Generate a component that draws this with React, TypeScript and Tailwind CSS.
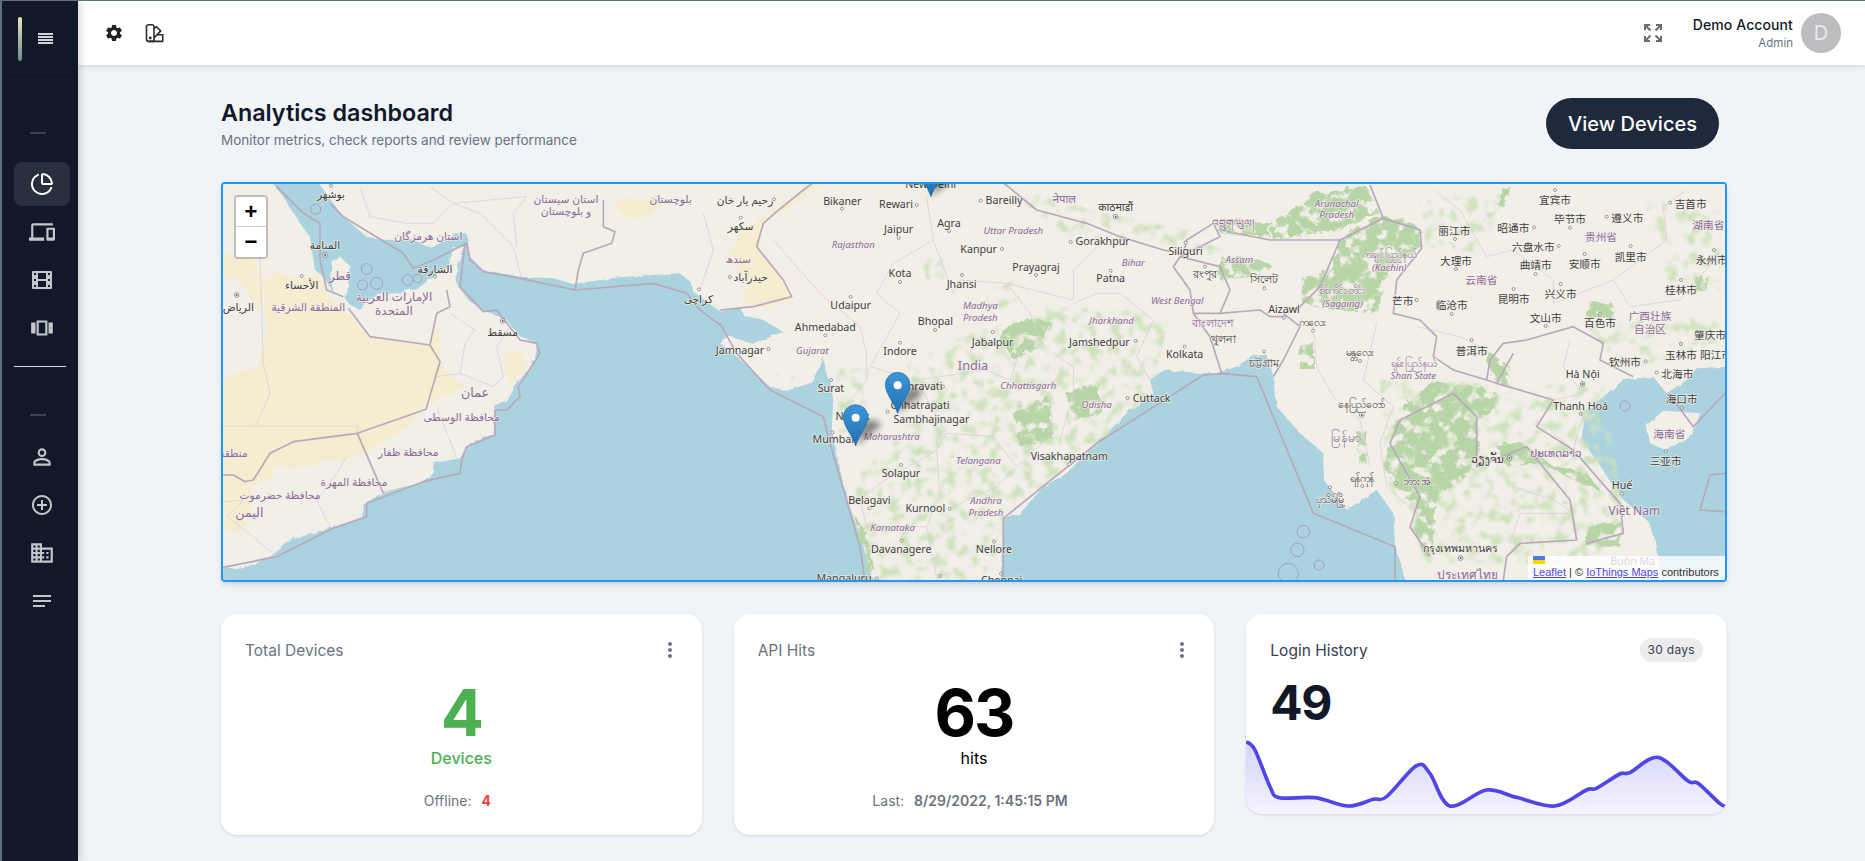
import { ChartPie } from "lucide-react";
import {
  MdMoreVert,
  MdOutlineControlPoint,
  MdOutlineDevices,
  MdOutlineDomain,
  MdOutlineNotes,
  MdOutlinePersonOutline,
  MdOutlineViewCarousel,
  MdSettings,
} from "react-icons/md";

// Map coordinates are page px * 3, the three offsets below are the crop origins
const A = 660;
const B = 2160;
const C = 3660;

const pts = (ox: number, s: string) =>
  s
    .trim()
    .split(/\s+/)
    .map((p) => {
      const [x, y] = p.split(",").map(Number);
      return `${x + ox},${y + 540}`;
    })
    .join(" ");

const arabia =
  pts(A, "-40,1172 80,1160 150,1130 220,1075 330,1045 430,1010 430,975 490,935 600,910 640,880 640,850 720,835 740,800 820,760 825,680 860,665 885,620 945,540 950,490 900,470 860,420 800,395 750,365 715,320 705,285 735,200 700,205 685,260 640,290 600,320 540,338 470,345 420,390 385,370 372,350 385,340 392,260 360,230 335,250 330,300 345,345 310,290 285,270 278,225 270,170 240,130 190,50 150,0 -40,0");

const asia =
  pts(A, "290,0 340,70 370,110 440,170 500,180 560,175 640,205 700,160 740,160 750,230 790,270 900,290 1000,295 1060,312 1200,292 1380,280 1415,310 1420,335 1480,380") +
  " " +
  pts(B, "0,395 60,382 70,405 140,425 190,455 100,490 30,470 0,490 50,530 150,620 200,632 270,610 300,560 310,530 322,590 332,610 340,660 335,750 350,830 380,950 430,1100 470,1240 840,1240 850,1020 900,1000 970,920 1040,880 1130,790 1230,690 1300,640 1290,600 1330,570 1450,580 1500,575") +
  " " +
  pts(C, "50,560 100,525 140,525 160,600 170,680 240,760 310,820 312,900 380,990 470,930 520,1000 525,1100 570,1240 1330,1240 1310,1100 1290,1030 1200,950 1130,840 1085,780 1090,700 1150,650 1210,600 1300,590 1340,640 1400,600 1430,565 1540,560 1540,0") +
  " " +
  pts(A, "290,0");

const hainan = pts(C, "1280,735 1330,692 1440,700 1420,760 1340,812 1290,790");

const sand = [
  pts(A, "-40,600 120,560 140,440 130,300 170,280 240,300 290,280 330,350 385,400 450,470 630,495 650,420 660,545 700,590 740,620 620,680 540,760 440,820 380,830 250,860 180,860 100,920 70,1060 40,1060 -40,1030"),
  pts(A, "860,520 900,510 915,560 870,620 850,570"),
  pts(A, "1190,60 1320,50 1330,90 1240,115 1200,100"),
  pts(A, "-40,190 50,230 100,230 130,300 120,400 60,300 -40,280"),
  pts(B, "150,90 250,20 340,0 240,60 170,100 120,150 110,200 190,300 215,370 120,380 70,370 80,300 30,220 60,160"),
];

const forest = [
  pts(C, "150,130 220,95 290,40 440,20 480,100 360,150 160,180"),
  pts(C, "360,180 480,110 560,120 605,150 605,205 530,250 470,330 440,400 305,385 250,370 245,295 340,260"),
  pts(C, "0,230 120,240 160,260 100,290 0,300"),
  pts(C, "0,120 150,130 150,175 0,160"),
  pts(C, "240,490 285,490 285,570 240,570"),
  pts(C, "550,680 640,610 720,610 830,640 830,690 770,720 780,800 750,880 650,960 590,960 550,960 490,860 510,790 540,720"),
  pts(C, "590,960 650,960 640,1090 620,1130 590,1080"),
  pts(C, "830,800 900,780 1000,860 1100,880 1150,940 1060,900 960,850 860,860"),
  pts(C, "1095,370 1180,370 1180,415 1095,415"),
  pts(C, "800,510 870,560 860,620 810,590"),
  pts(C, "1100,1040 1205,1030 1200,1100 1100,1100"),
  pts(C, "410,750 440,750 440,850 415,850"),
  pts(C, "460,330 490,330 480,390 450,400"),
  pts(C, "850,20 870,20 860,80 840,80"),
  pts(C, "1430,290 1470,270 1460,330 1430,340"),
  pts(B, "840,470 920,410 1000,430 960,500 880,540"),
  pts(B, "880,680 990,650 1000,780 900,800"),
  pts(B, "1040,640 1130,600 1150,700 1060,720"),
  pts(B, "400,1000 440,1060 470,1200 450,1200"),
];

const meadow = [
  pts(B, "560,560 700,480 1000,380 1350,400 1300,620 1180,760 1000,900 860,1000 850,1100 750,1240 470,1240 400,900 600,700"),
  pts(B, "600,240 670,230 680,300 620,300"),
  pts(B, "800,340 880,300 950,340 800,400"),
  pts(B, "860,20 1150,100 1500,170 1500,230 1300,190 1050,170 950,100"),
  pts(B, "170,580 225,590 215,620 180,610"),
  pts(B, "350,560 450,560 430,760 350,760"),
  pts(C, "480,600 1150,620 1210,1000 1120,1150 620,1150 500,900"),
  pts(C, "600,60 850,40 800,220 620,200"),
  pts(C, "1100,440 1500,400 1500,520 1200,560"),
  pts(C, "1270,60 1500,90 1500,330 1340,300"),
];

const borders = [
  pts(A, "385,385 450,470 630,495 660,545 618,688 412,760 220,785 150,820 100,900 75,905 40,885 -40,885"),
  pts(A, "412,760 490,940"),
  pts(A, "630,495 650,400 690,380 680,330"),
  pts(A, "170,20 250,100 300,130 300,240 320,330 370,350"),
  pts(A, "330,70 370,110 550,220 580,265 640,240 740,190 750,240 790,275 900,295 1065,330 1300,310 1400,340 1440,390 1500,435"),
  pts(A, "-40,1172 170,1130 340,1045 440,1010 440,970 610,905 720,880 725,840 740,800 825,765 825,690 860,690 900,650 895,620 960,520 950,490 900,480 830,390 790,395 720,320 735,190"),
  pts(A, "1150,60 1150,140 1185,155 1175,190 1090,220 1075,270 1065,330"),
  pts(B, "0,430 50,520 150,630 310,710 330,790 420,1100 440,1240"),
  pts(B, "850,1240 850,1015 1130,790 1450,585 1530,580"),
  pts(B, "0,390 100,380 215,350 190,300 110,200 130,130 170,95 250,30 290,0"),
  pts(B, "840,0 950,90 1100,130 1200,170 1330,210 1390,220 1400,180 1480,130 1500,170 1380,230 1360,260 1410,330 1420,400 1470,470 1505,580"),
  pts(B, "1380,230 1500,260 1530,330 1500,400 1420,400"),
  pts(C, "0,580 110,590 280,1000 525,1100 525,1240"),
  pts(C, "0,150 150,180 360,180 490,115 450,15"),
  pts(C, "490,115 600,150 605,205 530,300 520,400 600,420 650,470 640,530 700,570 800,600 810,540 850,490 920,480 1060,440 1150,490 1140,540 1240,590"),
  pts(C, "360,180 300,320 240,380 190,400 240,440 220,480 190,540 160,590"),
  pts(C, "0,400 120,390 150,410 190,410"),
  pts(C, "700,640 620,680 540,720 510,790 560,880 600,950 570,1040 630,1130"),
  pts(C, "700,640 770,710 770,860 920,800 1050,960 1070,1080 900,1090 860,1130 850,1200"),
  pts(C, "800,600 830,610 880,520"),
  pts(C, "830,610 1000,660 950,740 1060,810 1200,970 1210,1060 1100,1090"),
  pts(C, "1515,640 1420,740 1345,640"),
  pts(C, "1515,880 1470,885 1440,990 1515,995"),
];

const thin = [
  pts(A, "108,735 150,640 130,550 120,230"),
  pts(A, "-40,738 412,738 412,760"),
  pts(A, "650,590 720,580 820,620 850,590 830,500 870,440"),
  pts(A, "720,580 735,490 765,450 690,400"),
  pts(A, "650,680 710,835"),
  pts(A, "380,830 350,880 290,960 330,1040"),
  pts(A, "-40,970 70,960 20,1010 100,1070 170,1130"),
  pts(A, "420,20 450,110 560,130 640,130 700,70 780,100 880,200 905,295"),
  pts(A, "630,20 700,70 920,50 880,100 890,200"),
  pts(A, "1450,100 1480,210 1440,330"),
  pts(B, "160,180 300,340 420,440 440,520 440,600 360,700"),
  pts(B, "620,50 640,180 520,250 470,340 540,400 450,560 590,600 800,570 870,600 900,510 960,470 930,400 860,310 720,300 700,340 640,180"),
  pts(B, "590,600 680,760 650,810 660,940 620,1040 660,1240"),
  pts(B, "650,810 480,910 420,960 440,1040 620,1040"),
  pts(B, "680,760 820,770 890,860 830,920 700,980"),
  pts(B, "870,600 990,640 1000,760 890,860"),
  pts(B, "1000,520 1060,560 1060,640 1020,780"),
  pts(B, "1060,370 1130,340 1200,340 1300,420 1250,530 1290,600"),
  pts(B, "860,310 1060,360 1060,270 1130,200"),
  pts(C, "470,430 430,600 520,680 480,790 500,920 590,1000"),
  pts(C, "280,440 290,560 340,650 420,720 450,860"),
  pts(C, "640,30 720,90 800,230 880,210 1000,300 1000,370 1180,300 1340,180"),
  pts(C, "590,440 720,470 800,510"),
  pts(C, "1340,180 1330,80 1400,30"),
  pts(C, "1180,300 1230,380 1380,360 1500,220"),
  pts(C, "880,920 1000,960 1060,1000 900,1000 870,1090"),
  pts(C, "1000,760 1060,810 1090,700"),
  pts(C, "1050,480 1030,560 1090,640 1000,660"),
];

const circles: [number, number, number][] = [
  [A + 440, 267, 16],
  [A + 428, 315, 15],
  [A + 563, 300, 16],
  [A + 593, 295, 13],
  [A + 287, 88, 15],
  [A + 470, 310, 18],
  [C + 1215, 678, 15],
  [C + 250, 1055, 19],
  [C + 232, 1110, 20],
  [C + 297, 1155, 15],
  [C + 205, 1180, 30],
];

type Kind = "c" | "p" | "i";
type Label = [number, number, string, Kind, number?];

const labelsA: Label[] = [
  [333, 55, "بوشهر", "c"],
  [625, 180, "استان هرمزگان", "p"],
  [1038, 70, "استان سيستان", "p"],
  [1038, 105, "و بلوچستان", "p"],
  [1352, 70, "بلوچستان", "p"],
  [315, 207, "المنامة", "c"],
  [360, 300, "قطر", "p", 36],
  [645, 280, "الشارقة", "c"],
  [245, 327, "الأحساء", "c"],
  [55, 392, "الرياض", "c"],
  [265, 392, "المنطقة الشرقية", "p"],
  [522, 362, "الإمارات العربية", "p", 36],
  [522, 405, "المتحدة", "p", 36],
  [848, 468, "مسقط", "c"],
  [1435, 368, "کراچی", "c"],
  [765, 650, "عمان", "p", 38],
  [725, 724, "محافظة الوسطى", "p"],
  [565, 828, "محافظة ظفار", "p"],
  [402, 918, "محافظة المهرة", "p"],
  [180, 957, "محافظة حضرموت", "p"],
  [88, 1012, "اليمن", "p", 38],
  [40, 830, "منطقة", "p"],
];

const labelsB: Label[] = [
  [75, 72, "رحیم یار خان", "c"],
  [62, 150, "سکھر", "c"],
  [55, 250, "سندھ", "p"],
  [92, 303, "حیدرآباد", "c"],
  [367, 75, "Bikaner", "c"],
  [528, 85, "Rewari", "c"],
  [632, 24, "New Delhi", "c"],
  [852, 73, "Bareilly", "c"],
  [1033, 68, "नेपाल", "p", 34],
  [1187, 92, "काठमाडौं", "c"],
  [687, 140, "Agra", "c"],
  [536, 160, "Jaipur", "c"],
  [880, 163, "Uttar Pradesh", "i"],
  [400, 204, "Rajasthan", "i"],
  [1148, 196, "Gorakhpur", "c"],
  [776, 219, "Kanpur", "c"],
  [1397, 224, "Siliguri", "c"],
  [1240, 259, "Bihar", "i"],
  [948, 272, "Prayagraj", "c"],
  [540, 292, "Kota", "c"],
  [1172, 306, "Patna", "c"],
  [725, 325, "Jhansi", "c"],
  [1455, 294, "রংপুর", "c"],
  [392, 386, "Udaipur", "c"],
  [781, 387, "Madhya", "i"],
  [781, 422, "Pradesh", "i"],
  [1372, 371, "West Bengal", "i"],
  [646, 435, "Bhopal", "c"],
  [316, 452, "Ahmedabad", "c"],
  [1175, 431, "Jharkhand", "i"],
  [1480, 440, "বাংলাদেশ", "p", 34],
  [818, 497, "Jabalpur", "c"],
  [1138, 497, "Jamshedpur", "c"],
  [60, 521, "Jamnagar", "c"],
  [277, 523, "Gujarat", "i"],
  [540, 524, "Indore", "c"],
  [1394, 533, "Kolkata", "c"],
  [1510, 490, "খুলনা", "c"],
  [759, 571, "India", "p", 38],
  [333, 636, "Surat", "c"],
  [600, 631, "Amravati", "c"],
  [925, 628, "Chhattisgarh", "i"],
  [1295, 665, "Cuttack", "c"],
  [600, 688, "Chhatrapati", "c"],
  [634, 729, "Sambhajinagar", "c"],
  [1130, 685, "Odisha", "i"],
  [398, 720, "Nashik", "c"],
  [340, 790, "Mumbai", "c"],
  [515, 781, "Maharashtra", "i"],
  [775, 851, "Telangana", "i"],
  [1048, 839, "Visakhapatnam", "c"],
  [543, 892, "Solapur", "c"],
  [448, 972, "Belagavi", "c"],
  [616, 997, "Kurnool", "c"],
  [798, 973, "Andhra", "i"],
  [798, 1009, "Pradesh", "i"],
  [518, 1052, "Karnataka", "i"],
  [544, 1119, "Davanagere", "c"],
  [822, 1118, "Nellore", "c"],
  [372, 1205, "Mangaluru", "c"],
  [845, 1212, "Chennai", "c"],
];

const labelsC: Label[] = [
  [350, 80, "Arunachal", "i"],
  [350, 115, "Pradesh", "i"],
  [1005, 72, "宜宾市", "c"],
  [1412, 84, "吉首市", "c"],
  [1222, 125, "遵义市", "c"],
  [1050, 130, "毕节市", "c"],
  [1465, 148, "湖南省", "p"],
  [703, 165, "丽江市", "c"],
  [880, 155, "昭通市", "c"],
  [1143, 184, "贵州省", "p"],
  [940, 212, "六盘水市", "c"],
  [1232, 242, "凯里市", "c"],
  [1475, 252, "永州市", "c"],
  [708, 254, "大理市", "c"],
  [947, 268, "曲靖市", "c"],
  [1094, 265, "安顺市", "c"],
  [784, 313, "云南省", "p"],
  [1383, 342, "桂林市", "c"],
  [1022, 354, "兴义市", "c"],
  [881, 369, "昆明市", "c"],
  [548, 375, "芒市", "c"],
  [695, 388, "临沧市", "c"],
  [1290, 420, "广西壮族", "p"],
  [1290, 460, "自治区", "p"],
  [977, 426, "文山市", "c"],
  [1140, 442, "百色市", "c"],
  [1470, 478, "肇庆市", "c"],
  [1383, 536, "玉林市", "c"],
  [1488, 538, "阳江市", "c"],
  [755, 524, "普洱市", "c"],
  [1215, 559, "钦州市", "c"],
  [1372, 594, "北海市", "c"],
  [1088, 594, "Hà Nội", "c"],
  [1082, 689, "Thanh Hoá", "c"],
  [1385, 670, "海口市", "c"],
  [1348, 775, "海南省", "p"],
  [1337, 856, "三亚市", "c"],
  [1206, 928, "Huế", "c"],
  [1243, 1005, "Việt Nam", "p", 36],
  [1238, 1155, "Buôn Ma", "c"],
  [508, 233, "ကချင်ပြည်နယ်", "p"],
  [508, 272, "(Kachin)", "i"],
  [368, 342, "စစ်ကိုင်းတိုင်း", "p"],
  [368, 381, "(Sagaing)", "i"],
  [279, 438, "ကလေး", "c"],
  [420, 529, "မန္တလေး", "c"],
  [580, 560, "ရှမ်းပြည်နယ်", "p"],
  [580, 598, "Shan State", "i"],
  [425, 685, "နေပြည်တော်", "c"],
  [378, 785, "မြန်မာ", "p", 38],
  [427, 905, "ရန်ကုန်", "c"],
  [588, 915, "ဘားအံ", "c"],
  [330, 970, "ပုသိမ်မြို့", "c"],
  [133, 310, "সিলেট", "c"],
  [132, 562, "চট্টগ্রাম", "c"],
  [192, 400, "Aizawl", "c"],
  [58, 248, "Assam", "i"],
  [802, 848, "ວຽງຈັນ", "c"],
  [1008, 830, "ປະເທດລາວ", "p"],
  [722, 1115, "กรุงเทพมหานคร", "c"],
  [742, 1197, "ประเทศไทย", "p", 36],
  [40, 140, "འབྲུག་ཡུལ།", "p"],
];

const dots: [number, number, number?][] = [
  [A + 333, 17],
  [A + 315, 225, 1],
  [A + 245, 288],
  [A + 50, 345, 1],
  [A + 848, 423, 1],
  [A + 1437, 328],
  [A + 645, 290],
  ...(
    [
      [162, 58], [62, 113], [30, 291], [366, 86], [590, 75], [782, 62], [687, 153], [536, 174],
      [1052, 186], [846, 207], [1397, 188], [948, 285], [540, 306], [1172, 272], [726, 285],
      [1455, 260], [392, 351], [645, 450], [316, 466], [818, 456], [1247, 483], [145, 507],
      [540, 488], [1394, 500], [1475, 479], [333, 600], [669, 620], [1223, 654], [503, 695],
      [337, 757], [1048, 853], [543, 855], [448, 985], [689, 986], [545, 1082], [822, 1085],
      [470, 1195], [660, 1188], [843, 1181],
    ] as [number, number][]
  ).map(([x, y]): [number, number] => [B + x, y]),
  [B + 1187, 110, 1],
  ...(
    [
      [1005, 30], [1350, 68], [1160, 110], [1050, 143], [705, 177], [942, 142], [1016, 198],
      [1232, 198], [1482, 210], [708, 267], [947, 282], [1094, 222], [1383, 300], [1022, 312],
      [881, 327], [590, 360], [695, 402], [977, 438], [1140, 402], [1383, 492], [755, 480],
      [1277, 544], [1310, 578], [1082, 702], [1385, 684], [1337, 813], [1206, 941], [279, 452],
      [420, 543], [427, 918], [527, 910], [330, 922], [133, 325], [132, 515], [192, 413],
    ] as [number, number][]
  ).map(([x, y]): [number, number] => [C + x, y]),
  [C + 1088, 612, 1],
  [C + 425, 705, 1],
  [C + 868, 834, 1],
  [C + 722, 1134, 1],
];

const labelGroups: [number, Label[]][] = [
  [A, labelsA],
  [B, labelsB],
  [C, labelsC],
];

const pins: [number, number][] = [
  [B + 633, 50],
  [B + 533, 700],
  [B + 407, 797],
];

function MapView() {
  return (
    <svg viewBox="669 552 4506 1188" preserveAspectRatio="none" className="block w-full h-full">
      <defs>
        <filter id="rough" x="-5%" y="-5%" width="110%" height="110%">
          <feTurbulence type="fractalNoise" baseFrequency="0.02" numOctaves="3" seed="4" />
          <feDisplacementMap in="SourceGraphic" scale="28" />
          <feGaussianBlur stdDeviation="1.6" />
        </filter>
        {/* mottled vegetation: noise alpha thresholded into a mask */}
        <filter id="patchy" x="-5%" y="-5%" width="110%" height="110%">
          <feTurbulence type="fractalNoise" baseFrequency="0.03" numOctaves="4" seed="7" />
          <feColorMatrix type="matrix" values="0 0 0 0 0  0 0 0 0 0  0 0 0 0 0  0 0 0 4.5 -2.2" result="mask" />
          <feComposite in="SourceGraphic" in2="mask" operator="in" />
          <feGaussianBlur stdDeviation="3" />
        </filter>
        <filter id="dense" x="-5%" y="-5%" width="110%" height="110%">
          <feTurbulence type="fractalNoise" baseFrequency="0.03" numOctaves="4" seed="12" result="noise" />
          <feColorMatrix in="noise" type="matrix" values="0 0 0 0 0  0 0 0 0 0  0 0 0 0 0  0 0 0 6 -1.9" result="mask" />
          <feDisplacementMap in="SourceGraphic" in2="noise" scale="30" result="moved" />
          <feComposite in="moved" in2="mask" operator="in" />
          <feGaussianBlur stdDeviation="2" />
        </filter>
        <filter id="coast" x="-5%" y="-5%" width="110%" height="110%">
          <feTurbulence type="fractalNoise" baseFrequency="0.03" numOctaves="3" seed="9" />
          <feDisplacementMap in="SourceGraphic" scale="12" />
        </filter>
        <filter id="pinShadow" x="-50%" y="-50%" width="200%" height="200%">
          <feGaussianBlur stdDeviation="9" />
        </filter>
        <linearGradient id="pinFill" x1="0" y1="0" x2="0" y2="1">
          <stop offset="0" stopColor="#3d96d8" />
          <stop offset="1" stopColor="#2270b0" />
        </linearGradient>
      </defs>
      <rect x="669" y="552" width="4506" height="1188" fill="#aad3df" />
      <g filter="url(#coast)" fill="#f2efe9">
        <polygon points={arabia} />
        <polygon points={asia} />
        <polygon points={hainan} />
      </g>
      <g filter="url(#rough)">
        {sand.map((p, i) => (
          <polygon key={i} points={p} fill="#f6ecd0" />
        ))}
      </g>
      <g filter="url(#patchy)">
        {meadow.map((p, i) => (
          <polygon key={i} points={p} fill="#cfe2bd" />
        ))}
      </g>
      <g filter="url(#dense)">
        {forest.map((p, i) => (
          <polygon key={i} points={p} fill="#b7d5a7" />
        ))}
      </g>
      <g fill="none" strokeLinejoin="round">
        {thin.map((p, i) => (
          <polyline key={i} points={p} stroke="#dbd0da" strokeWidth="2.5" />
        ))}
        {borders.map((p, i) => (
          <polyline key={i} points={p} stroke="#b9a8bb" strokeWidth="5" />
        ))}
        {circles.map(([x, y, r], i) => (
          <circle key={i} cx={x} cy={y + 540} r={r} stroke="#a99cb5" strokeWidth="3" />
        ))}
      </g>
      {dots.map(([x, y, ring], i) => (
        <g key={i}>
          <circle cx={x} cy={y + 540} r={ring ? 7 : 4.5} fill="#fff" stroke="#666" strokeWidth="2" />
          {ring ? <circle cx={x} cy={y + 540} r="3" fill="#555" /> : null}
        </g>
      ))}
      <g
        textAnchor="middle"
        strokeLinejoin="round"
        className="font-['Noto_Sans','DejaVu_Sans','Noto_Sans_CJK_SC',sans-serif]"
      >
        {labelGroups.map(([ox, list]) =>
          list.map(([x, y, text, kind, size]) => (
            <text
              key={`${ox}${text}${x}`}
              x={x + ox}
              y={y + 540}
              fontSize={size ?? (kind === "i" ? 29 : 32)}
              fontStyle={kind === "i" ? "italic" : "normal"}
              fill={kind === "c" ? "#3f3f3f" : "#8b6b97"}
              stroke="#f2efe9"
              strokeOpacity="0.8"
              strokeWidth="5"
              paintOrder="stroke"
            >
              {text}
            </text>
          )),
        )}
      </g>
      {pins.map(([x, y]) => (
        <g key={x} transform={`translate(${x} ${y + 540})`}>
          <path d="M0,0 L70,-55 C85,-70 50,-85 25,-70 Z" fill="#000" opacity="0.45" filter="url(#pinShadow)" />
          <path
            d="M0,0 C-8,-28 -37,-58 -37,-86 A37,37 0 1 1 37,-86 C37,-58 8,-28 0,0 Z"
            fill="url(#pinFill)"
            stroke="#1f6ba6"
            strokeWidth="2"
          />
          <circle cx="0" cy="-84" r="12" fill="#fff" />
        </g>
      ))}
    </svg>
  );
}

const curve = [
  [48, 425], [75, 450], [120, 560], [148, 593], [255, 593], [355, 618], [430, 598], [470, 590],
  [560, 497], [600, 520], [660, 618], [770, 570], [860, 592], [975, 618], [1070, 570], [1100, 565],
  [1170, 522], [1200, 518], [1285, 472], [1375, 543], [1405, 550], [1470, 610], [1491, 620],
];

// catmull-rom through the points
function smooth(p: number[][]) {
  let d = `M${p[0][0]},${p[0][1]}`;
  for (let i = 0; i < p.length - 1; i++) {
    const a = p[Math.max(i - 1, 0)];
    const b = p[i];
    const c = p[i + 1];
    const e = p[Math.min(i + 2, p.length - 1)];
    const c1 = [b[0] + (c[0] - a[0]) / 6, b[1] + (c[1] - a[1]) / 6];
    const c2 = [c[0] - (e[0] - b[0]) / 6, c[1] - (e[1] - b[1]) / 6];
    d += ` C${c1[0]},${c1[1]} ${c2[0]},${c2[1]} ${c[0]},${c[1]}`;
  }
  return d;
}

function LoginChart() {
  const line = smooth(curve);
  return (
    <svg viewBox="48 405 1443 237" preserveAspectRatio="none" className="block w-full h-[79px] mt-2">
      <defs>
        <linearGradient id="area" x1="0" y1="0" x2="0" y2="1">
          <stop offset="0" stopColor="#4f46e5" stopOpacity="0.24" />
          <stop offset="1" stopColor="#4f46e5" stopOpacity="0.06" />
        </linearGradient>
      </defs>
      <path d={`${line} L1491,642 L48,642 Z`} fill="url(#area)" />
      <path d={line} fill="none" stroke="#4f46e5" strokeWidth="11" />
    </svg>
  );
}

function PaletteIcon() {
  return (
    <svg viewBox="0 0 24 24" className="w-[20px] h-[20px]" fill="none" stroke="#2b2b2b" strokeWidth="1.9" strokeLinejoin="round">
      <path d="M3 4.5A2.5 2.5 0 0 1 5.500 2h4A2.500 2.500 0 0 1 12 4.500V22H5.500A2.500 2.500 0 0 1 3 19.500Z" />
      <path d="M12 6.500 15 4.500 20 9.500 12 18" />
      <path d="M16 14H22.500V22H5.500" />
      <circle cx="7.500" cy="18" r="0.8" fill="#2b2b2b" />
    </svg>
  );
}

function ExpandIcon() {
  return (
    <svg viewBox="0 0 18 18" className="w-[18px] h-[18px]" fill="none" stroke="#6b6b6b" strokeWidth="2">
      <path d="M1 6V1h5M1 1l5.500 5.500" />
      <path d="M17 6V1h-5M17 1l-5.500 5.500" />
      <path d="M1 12v5h5M1 17l5.500-5.500" />
      <path d="M17 12v5h-5M17 17l-5.500-5.500" />
    </svg>
  );
}

function FilmIcon() {
  return (
    <svg viewBox="0 0 20 18" className="w-5 h-[18px]" fill="#c3c6cb">
      <path
        fillRule="evenodd"
        d="M1 0h18a1 1 0 0 1 1 1v16a1 1 0 0 1-1 1H1a1 1 0 0 1-1-1V1a1 1 0 0 1 1-1ZM2 2v2h2V2H2Zm0 6v2h2V8H2Zm0 6v2h2v-2H2ZM16 2v2h2V2h-2Zm0 6v2h2V8h-2Zm0 6v2h2v-2h-2ZM6 2v6h8V2H6Zm0 8v6h8v-6H6Z"
      />
    </svg>
  );
}

function NavItem({ icon, active }: { icon: React.ReactNode; active?: boolean }) {
  return (
    <div className={`ml-3 w-14 h-11 rounded-lg flex items-center justify-center text-[#c3c6cb] ${active ? "bg-[#282f3d] text-white" : ""}`}>
      {icon}
    </div>
  );
}

function Sidebar() {
  return (
    <aside className="relative z-20 w-[78px] shrink-0 h-full bg-[#111827] border-l-2 border-[#5f7078] shadow-[2px_0_8px_rgba(0,0,0,0.18)]">
      <div className="h-[76px] border-b border-[#0b111d] flex items-start">
        <div className="ml-4 mt-[16px] w-1 h-11 rounded-sm bg-gradient-to-b from-[#e9e5c4] to-[#6f8d88]" />
        <div className="ml-[16px] mt-[32px] flex flex-col gap-[1px] w-[15px]">
          <div className="h-[2px] bg-[#cfd2d6]" />
          <div className="h-[2px] bg-[#cfd2d6]" />
          <div className="h-[2px] bg-[#cfd2d6]" />
          <div className="h-[2px] bg-[#cfd2d6]" />
        </div>
      </div>
      <div className="ml-7 mt-[55px] w-4 h-0.5 bg-[#374151]" />
      <div className="mt-7 flex flex-col gap-1">
        <NavItem active icon={<ChartPie size={24} strokeWidth={2} />} />
        <NavItem icon={<MdOutlineDevices size={26} />} />
        <NavItem icon={<FilmIcon />} />
        <NavItem icon={<MdOutlineViewCarousel size={26} />} />
      </div>
      <div className="ml-3 mt-4 w-[52px] h-px bg-[#d8dade]" />
      <div className="ml-7 mt-[47px] w-4 h-0.5 bg-[#374151]" />
      <div className="mt-[19px] flex flex-col gap-1">
        <NavItem icon={<MdOutlinePersonOutline size={26} />} />
        <NavItem icon={<MdOutlineControlPoint size={24} />} />
        <NavItem icon={<MdOutlineDomain size={26} />} />
        <NavItem icon={<MdOutlineNotes size={24} />} />
      </div>
    </aside>
  );
}

function TopBar() {
  return (
    <header className="relative z-10 h-[64px] shrink-0 bg-white shadow-[0_1px_6px_rgba(0,0,0,0.14)] flex items-center pl-[26px] pr-6">
      <MdSettings size={20} className="text-[#212121]" />
      <div className="ml-5">
        <PaletteIcon />
      </div>
      <div className="ml-auto mr-[31px]">
        <ExpandIcon />
      </div>
      <div className="text-right mr-2">
        <div className="text-sm font-medium text-[#111827] tracking-[0.1px] leading-5">Demo Account</div>
        <div className="text-[11.5px] text-[#6b7280] leading-4">Admin</div>
      </div>
      <div className="w-10 h-10 rounded-full bg-[#bdbdbd] text-[#e4eaf5] text-xl flex items-center justify-center">D</div>
    </header>
  );
}

function StatCard({
  title,
  value,
  unit,
  footer,
  valueColor,
  unitClass,
}: {
  title: string;
  value: string;
  unit: string;
  footer: React.ReactNode;
  valueColor: string;
  unitClass: string;
}) {
  return (
    <div className="bg-white rounded-2xl shadow-[0_1px_3px_rgba(0,0,0,0.12)] px-6 pt-6 pb-6 h-[221px]">
      <div className="flex items-center justify-between h-6">
        <span className="pt-0.5 text-[15.5px] text-[#6b7280]">{title}</span>
        <MdMoreVert size={24} className="text-[#6b7280] -mr-1" />
      </div>
      <div className={`mt-[18px] text-center text-[64px] tracking-[-2px] font-bold leading-[66px] ${valueColor}`}>{value}</div>
      <div className={`text-center text-base leading-6 ${unitClass}`}>{unit}</div>
      <div className="mt-[21px] pr-2 text-center text-sm leading-5 text-[#6b7280]">{footer}</div>
    </div>
  );
}

export default function App() {
  return (
    <div className="h-screen w-full overflow-hidden flex bg-[#f0f4f9] border-t border-[#5f7078] font-['Inter',sans-serif]">
      <Sidebar />
      <div className="flex-1 min-w-0 flex flex-col">
        <TopBar />
        <main className="pl-[143px] pr-[138px]">
          <div className="mt-[33px] h-[51px] flex items-start justify-between">
            <div>
              <h1 className="text-[23.3px] font-semibold text-[#111827] leading-[30px]">Analytics dashboard</h1>
              <p className="mt-0.5 text-[13.5px] text-[#6b7280] leading-5">Monitor metrics, check reports and review performance</p>
            </div>
            <button className="mr-2 w-[173px] h-[51px] rounded-full bg-[#1e293b] text-white text-xl font-medium">View Devices</button>
          </div>

          <div className="relative mt-[33px] h-[400px] border-2 border-[#2196f3] rounded-[4px] overflow-hidden shadow-md">
            <MapView />
            <div className="absolute left-[11px] top-[11px] border-2 border-black/20 rounded-[4px] bg-clip-padding">
              <button className="block w-[30px] h-[30px] bg-white rounded-t-[2px] border-b border-[#ccc] text-[22px] leading-[28px] font-bold text-black font-['Liberation_Sans',sans-serif]">+</button>
              <button className="block w-[30px] h-[30px] bg-white rounded-b-[2px] text-[22px] leading-[28px] font-bold text-black font-['Liberation_Sans',sans-serif]">−</button>
            </div>
            <div className="absolute right-0 bottom-0 w-[197px] h-6 pl-[5px] bg-white/80 text-[11px] leading-3 text-[#333] font-['Liberation_Sans',sans-serif]">
              <svg viewBox="0 0 12 8" className="block w-3 h-2">
                <rect width="12" height="4" fill="#4c7be1" />
                <rect y="4" width="12" height="4" fill="#ffd500" />
              </svg>
              <div className="mt-[2px] whitespace-nowrap">
                <span className="underline text-[#4f46e5]">Leaflet</span> | © <span className="underline text-[#4f46e5]">IoThings Maps</span> contributors
              </div>
            </div>
          </div>

          <div className="mt-8 grid grid-cols-3 gap-8 items-start">
            <StatCard
              title="Total Devices"
              value="4"
              unit="Devices"
              valueColor="text-[#4caf50]"
              unitClass="text-[#4caf50] font-medium"
              footer={
                <>
                  Offline: <span className="ml-1.5 font-bold text-[#f44336]">4</span>
                </>
              }
            />
            <StatCard
              title="API Hits"
              value="63"
              unit="hits"
              valueColor="text-black"
              unitClass="text-black"
              footer={
                <>
                  Last: <span className="ml-1.5 font-semibold">8/29/2022, 1:45:15 PM</span>
                </>
              }
            />
            <div className="bg-white rounded-2xl shadow-[0_1px_3px_rgba(0,0,0,0.12)] h-[200px] overflow-hidden">
              <div className="px-6 pt-6 flex items-center justify-between h-12">
                <span className="pt-0.5 text-[15.5px] text-[#374151]">Login History</span>
                <span className="h-6 px-2 rounded-full bg-[#ececec] text-xs leading-6 tracking-[0.3px] text-[#374151]">30 days</span>
              </div>
              <div className="mt-[17px] px-6 text-5xl font-bold leading-[48px] tracking-[-1.5px] text-[#111827]">49</div>
              <LoginChart />
            </div>
          </div>
        </main>
      </div>
    </div>
  );
}
